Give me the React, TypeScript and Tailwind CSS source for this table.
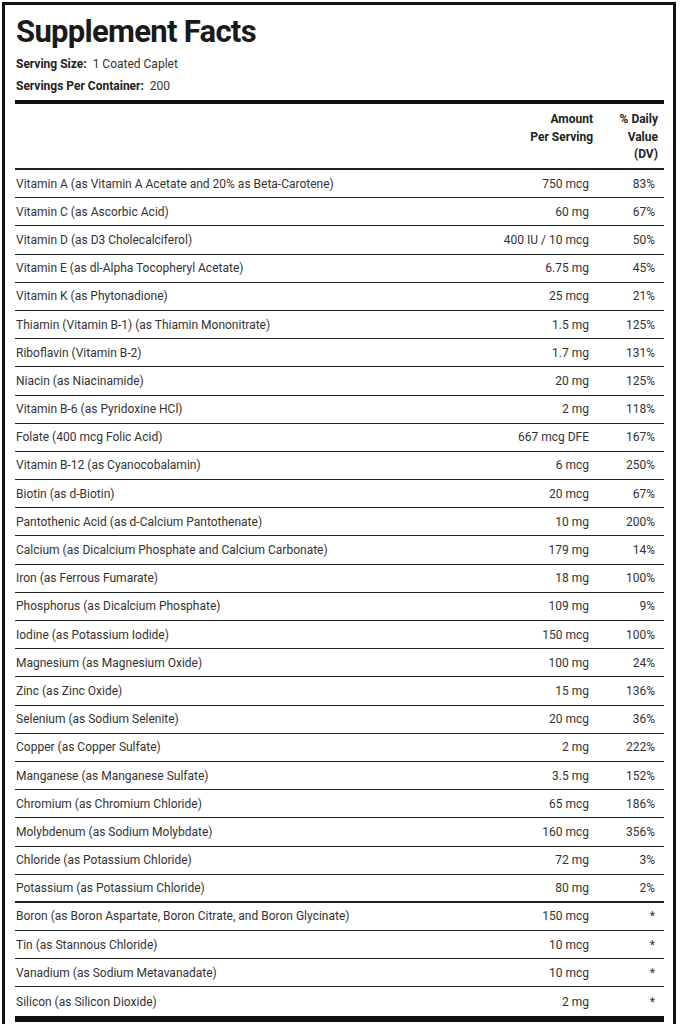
const rows: { name: string; amount: string; dv: string; thick?: boolean }[] = [
  { name: "Vitamin A (as Vitamin A Acetate and 20% as Beta-Carotene)", amount: "750 mcg", dv: "83%" },
  { name: "Vitamin C (as Ascorbic Acid)", amount: "60 mg", dv: "67%" },
  { name: "Vitamin D (as D3 Cholecalciferol)", amount: "400 IU / 10 mcg", dv: "50%" },
  { name: "Vitamin E (as dl-Alpha Tocopheryl Acetate)", amount: "6.75 mg", dv: "45%" },
  { name: "Vitamin K (as Phytonadione)", amount: "25 mcg", dv: "21%" },
  { name: "Thiamin (Vitamin B-1) (as Thiamin Mononitrate)", amount: "1.5 mg", dv: "125%" },
  { name: "Riboflavin (Vitamin B-2)", amount: "1.7 mg", dv: "131%" },
  { name: "Niacin (as Niacinamide)", amount: "20 mg", dv: "125%" },
  { name: "Vitamin B-6 (as Pyridoxine HCl)", amount: "2 mg", dv: "118%" },
  { name: "Folate (400 mcg Folic Acid)", amount: "667 mcg DFE", dv: "167%" },
  { name: "Vitamin B-12 (as Cyanocobalamin)", amount: "6 mcg", dv: "250%" },
  { name: "Biotin (as d-Biotin)", amount: "20 mcg", dv: "67%" },
  { name: "Pantothenic Acid (as d-Calcium Pantothenate)", amount: "10 mg", dv: "200%" },
  { name: "Calcium (as Dicalcium Phosphate and Calcium Carbonate)", amount: "179 mg", dv: "14%" },
  { name: "Iron (as Ferrous Fumarate)", amount: "18 mg", dv: "100%" },
  { name: "Phosphorus (as Dicalcium Phosphate)", amount: "109 mg", dv: "9%" },
  { name: "Iodine (as Potassium Iodide)", amount: "150 mcg", dv: "100%" },
  { name: "Magnesium (as Magnesium Oxide)", amount: "100 mg", dv: "24%" },
  { name: "Zinc (as Zinc Oxide)", amount: "15 mg", dv: "136%" },
  { name: "Selenium (as Sodium Selenite)", amount: "20 mcg", dv: "36%" },
  { name: "Copper (as Copper Sulfate)", amount: "2 mg", dv: "222%" },
  { name: "Manganese (as Manganese Sulfate)", amount: "3.5 mg", dv: "152%" },
  { name: "Chromium (as Chromium Chloride)", amount: "65 mcg", dv: "186%" },
  { name: "Molybdenum (as Sodium Molybdate)", amount: "160 mcg", dv: "356%" },
  { name: "Chloride (as Potassium Chloride)", amount: "72 mg", dv: "3%" },
  { name: "Potassium (as Potassium Chloride)", amount: "80 mg", dv: "2%", thick: true },
  { name: "Boron (as Boron Aspartate, Boron Citrate, and Boron Glycinate)", amount: "150 mcg", dv: "*" },
  { name: "Tin (as Stannous Chloride)", amount: "10 mcg", dv: "*" },
  { name: "Vanadium (as Sodium Metavanadate)", amount: "10 mcg", dv: "*" },
  { name: "Silicon (as Silicon Dioxide)", amount: "2 mg", dv: "*" },
];

export default function App() {
  return (
    <div className="bg-white pl-[2px] pt-[2px] font-['Roboto',sans-serif]">
      <div className="w-[674px] border-[3px] border-[#111] pl-[10px] pr-[9px] pt-[10px] text-[#222]">
        <h1 className="text-[31px] leading-[33px] font-bold tracking-[-0.7px] pl-[1px] text-[#1a1a1a]">
          Supplement Facts
        </h1>
        <div className="mt-[5px] h-[22px] flex items-center gap-[6px] text-[12px] pl-[1px]">
          <span className="font-bold">Serving Size:</span>
          <span className="text-[#333]">1 Coated Caplet</span>
        </div>
        <div className="h-[22px] flex items-center gap-[6px] text-[12px] pl-[1px]">
          <span className="font-bold">Servings Per Container:</span>
          <span className="text-[#333]">200</span>
        </div>
        <div className="mt-[3px] h-[4px] bg-[#111]" />
        <div className="grid grid-cols-[1fr_110px_64px] h-[66px] border-b-2 border-[#222] pt-[7px] text-[12px] leading-[17.5px] font-bold">
          <div />
          <div className="text-right pr-[7px]">
            Amount
            <br />
            Per Serving
          </div>
          <div className="text-right pr-[6px]">
            % Daily
            <br />
            Value
            <br />
            (DV)
          </div>
        </div>
        {rows.map((r, i) => (
          <div
            key={r.name}
            className={
              "grid grid-cols-[1fr_110px_64px] items-center h-[28.2px] text-[12px] text-[#333] " +
              (i === rows.length - 1 ? "" : r.thick ? "border-b-2 border-[#222]" : "border-b border-[#222]")
            }
          >
            <div className="pl-[1px] whitespace-nowrap">{r.name}</div>
            <div className="text-right pr-[11px] whitespace-nowrap">{r.amount}</div>
            <div className="text-right pr-[9px]">{r.dv}</div>
          </div>
        ))}
        <div className="h-[6px] bg-[#111]" />
        <div className="h-[10px]" />
      </div>
    </div>
  );
}
